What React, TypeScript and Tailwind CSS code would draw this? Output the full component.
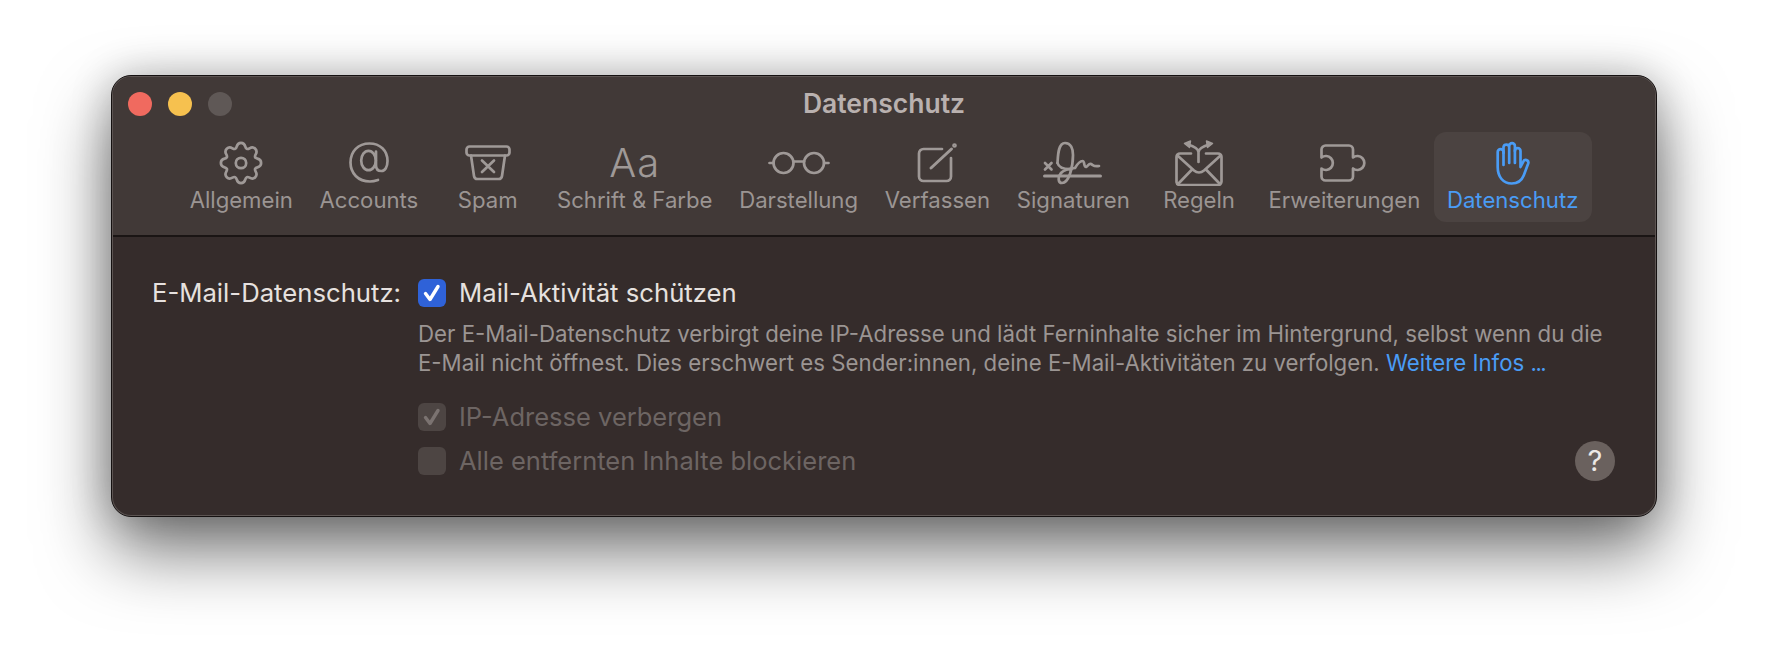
import React from "react";

const G = "#9f9997";

function Svg({ w, h, children, color = G, sw = 2.7 }: { w: number; h: number; children: React.ReactNode; color?: string; sw?: number }) {
  return (
    <svg width={w} height={h} viewBox={`0 0 ${w} ${h}`} fill="none" stroke={color} strokeWidth={sw} strokeLinecap="round" strokeLinejoin="round">
      {children}
    </svg>
  );
}

function gearPath() {
  const cx = 22;
  const cy = 22;
  const verts: [number, number][] = [];
  for (let i = 0; i < 8; i++) {
    const a = (i * 45 - 90) * (Math.PI / 180);
    const spread = 9.5 * (Math.PI / 180);
    const valley = 22.5 * (Math.PI / 180);
    const pts: [number, number][] = [
      [a - spread, 20.4],
      [a + spread, 20.4],
      [a + valley, 13.8],
    ];
    for (const [ang, r] of pts) verts.push([cx + r * Math.cos(ang), cy + r * Math.sin(ang)]);
  }
  const mid = (p: [number, number], q: [number, number]) => [(p[0] + q[0]) / 2, (p[1] + q[1]) / 2];
  const n = verts.length;
  const s = mid(verts[n - 1], verts[0]);
  let d = `M${s[0].toFixed(2)} ${s[1].toFixed(2)}`;
  for (let i = 0; i < n; i++) {
    const m = mid(verts[i], verts[(i + 1) % n]);
    d += `Q${verts[i][0].toFixed(2)} ${verts[i][1].toFixed(2)} ${m[0].toFixed(2)} ${m[1].toFixed(2)}`;
  }
  return d + "Z";
}

const Gear = () => (
  <Svg w={44} h={44}>
    <path d={gearPath()} />
    <circle cx="22" cy="22" r="5.200" />
  </Svg>
);
const At = () => (
  <Svg w={40} h={41}>
    <path d="M29 38C26 39 24 39.500 21 39.500 9 39.500 1.500 31 1.500 20.500 1.500 9.500 9 1.500 20.500 1.500 31 1.500 38.500 8.500 38.500 19 38.500 25 36 29 32.500 29 29 29 27 27 27 23.500V9.500" />
    <ellipse cx="19.500" cy="18.500" rx="7.300" ry="9.700" />
  </Svg>
);
const Trash = () => (
  <Svg w={46} h={36}>
    <rect x="1.500" y="1.500" width="43" height="9" rx="3" />
    <path d="M6 10.500L9 31a3.500 3.500 0 0 0 3.500 3h21a3.500 3.500 0 0 0 3.500-3l3-20.500" />
    <path d="M17 15.500l12 11.500M29 15.500L17 27" />
  </Svg>
);
const Glasses = () => (
  <Svg w={62} h={26}>
    <circle cx="15.500" cy="13" r="10" />
    <circle cx="46" cy="13" r="10" />
    <path d="M1.500 13h4M56 13h4.500M25.500 11.500h10.500" />
  </Svg>
);
const Compose = () => (
  <Svg w={40} h={40}>
    <path d="M25 6H6.500a4.500 4.500 0 0 0-4.500 4.500v23a4.500 4.500 0 0 0 4.500 4.500h23a4.500 4.500 0 0 0 4.500-4.500V15" />
    <path d="M14 25L34.500 6" strokeWidth="3" />
    <circle cx="37.500" cy="2.500" r="1" />
  </Svg>
);
const Signature = () => (
  <Svg w={60} h={44}>
    <path d="M1.500 35h56" strokeWidth="3" />
    <path d="M2 22l6.500 6.500M8.500 22L2 28.500" />
    <path d="M14.500 22C15 15 15 2 22 2 28 2 30 8 30 14 30 26 26 42 19 42 15 42 14.500 36 18 32 21 28.500 27 27.500 32 27 35 22 37.500 20 39.500 20 42 20 40.500 26 43 26 45 25 46 22 48 23 50 24 51 26 56 25" />
    <path d="M14.500 22c1 3.500 5 6.500 14 6" />
  </Svg>
);
const Rules = () => (
  <Svg w={48} h={46}>
    <path d="M16 13.500H5a3.500 3.500 0 0 0-3.500 3.500v25A3.500 3.500 0 0 0 5 45h38a3.500 3.500 0 0 0 3.500-3.500V17a3.500 3.500 0 0 0-3.500-3.500H31" />
    <path d="M3 16l16 14.500c3 2.500 7 2.500 10 0L45 16M3.500 43.500L17.500 29M44.500 43.500L30.500 29" />
    <path d="M23.500 22V12C23 8.500 18 6 13 4.500M23.500 12C24 8.500 29 6 34 4.500" />
    <path d="M9.500 3.500L15.500 1 14.500 7.500zM37.500 3.500L31.500 1 32.500 7.500z" fill={G} strokeWidth="1.500" />
  </Svg>
);
const Puzzle = () => (
  <Svg w={48} h={38}>
    <path d="M5.500 1.500H29a4 4 0 0 1 4 4V13.500A7 7 0 1 1 33 24.500V32.500a4 4 0 0 1-4 4H5.500a4 4 0 0 1-4-4V24.500A7 7 0 1 0 1.500 13.500V5.500a4 4 0 0 1 4-4z" />
  </Svg>
);
const Hand = () => (
  <Svg w={34} h={44} color="#4a9cf5">
    <path d="M7.500 24V11a2.900 2.900 0 0 0-5.800 0v15c0 10 5.500 16.500 14 16.500 6 0 10-3 12-8l4.500-12a2.600 2.600 0 0 0-5-1.700L24.500 26V10a2.800 2.800 0 0 0-5.600 0" />
    <path d="M7.500 12V6a2.900 2.900 0 0 1 5.700 0v16M13.200 6V5a2.850 2.850 0 0 1 5.700 0v17" />
  </Svg>
);
const Aa = () => (
  <span className="text-[40px] leading-[46px] font-light tracking-[1px] text-[#9f9997]">Aa</span>
);

const items: { label: string; icon: React.ReactNode; active?: boolean }[] = [
  { label: "Allgemein", icon: <Gear /> },
  { label: "Accounts", icon: <At /> },
  { label: "Spam", icon: <Trash /> },
  { label: "Schrift & Farbe", icon: <Aa /> },
  { label: "Darstellung", icon: <Glasses /> },
  { label: "Verfassen", icon: <Compose /> },
  { label: "Signaturen", icon: <Signature /> },
  { label: "Regeln", icon: <Rules /> },
  { label: "Erweiterungen", icon: <Puzzle /> },
  { label: "Datenschutz", icon: <Hand />, active: true },
];

function Box({ tone }: { tone: "on" | "dim" | "off" }) {
  const bg = tone === "on" ? "bg-[#2f62d8]" : "bg-[#4d4543]";
  return (
    <span className={`flex h-[28px] w-[28px] shrink-0 items-center justify-center rounded-[6px] ${bg}`}>
      {tone !== "off" && (
        <svg width="20" height="20" viewBox="0 0 20 20" fill="none" stroke={tone === "on" ? "#ffffff" : "#7b7371"} strokeWidth="3.400" strokeLinecap="round" strokeLinejoin="round">
          <path d="M3.500 10.500l4.500 6L16 3.500" />
        </svg>
      )}
    </span>
  );
}

export default function App() {
  return (
    <div className="h-[664px] w-[1768px] overflow-hidden bg-white pl-[111px] pt-[75px] font-['Inter',sans-serif]">
      <div className="h-[442px] w-[1546px] rounded-[20px] border border-[#151111] bg-[#5c5452] p-[1px] shadow-[0_34px_70px_rgba(0,0,0,0.55),0_0_40px_rgba(0,0,0,0.22)]">
        <div className="flex h-full flex-col overflow-hidden rounded-[18px] bg-[#352c2b]">
          <header className="flex h-[160px] shrink-0 flex-col border-b-2 border-[#1a1514] bg-[#413937]">
            <div className="flex h-[54px] shrink-0 items-center">
              <div className="flex w-[170px] gap-[16px] pl-[15px]">
                <span className="h-[24px] w-[24px] rounded-full bg-[#f06a5f]" />
                <span className="h-[24px] w-[24px] rounded-full bg-[#f6c14f]" />
                <span className="h-[24px] w-[24px] rounded-full bg-[#5f5856]" />
              </div>
              <div className="flex-1 pr-[170px] text-center text-[26.5px] font-semibold text-[#b9b1af]">Datenschutz</div>
            </div>
            <nav className="mt-[1px] flex justify-center">
              {items.map((it) => (
                <div key={it.label} className={`flex h-[90px] min-w-[112px] flex-col items-center rounded-[12px] px-[13.35px] ${it.active ? "bg-[#4b4341]" : ""}`}>
                  <div className="flex h-[56px] items-center justify-center pt-[5px]">{it.icon}</div>
                  <div className={`text-[22.15px] leading-[24px] whitespace-nowrap ${it.active ? "text-[#4a9cf5]" : "text-[#9b9593]"}`}>{it.label}</div>
                </div>
              ))}
            </nav>
          </header>
          <main className="flex flex-1 pr-[40px] pt-[40px]">
            <div className="w-[288px] shrink-0 text-right text-[25.7px] leading-[32px] text-[#e6e1df]">E-Mail-Datenschutz:</div>
            <div className="ml-[17px] flex flex-1 flex-col">
              <div className="flex h-[32px] items-center gap-[13px]">
                <Box tone="on" />
                <span className="text-[25.7px] text-[#e6e1df]">Mail-Aktivität schützen</span>
              </div>
              <p className="mt-[10px] whitespace-nowrap text-[22.25px] leading-[29px] text-[#9b9593]">
                Der E-Mail-Datenschutz verbirgt deine IP-Adresse und lädt Ferninhalte sicher im Hintergrund, selbst wenn du die
                <br />
                E-Mail nicht öffnest. Dies erschwert es Sender:innen, deine E-Mail-Aktivitäten zu verfolgen. <span className="text-[#4a9cf5]">Weitere Infos <span className="tracking-[-1.5px]">...</span></span>
              </p>
              <div className="mt-[24px] flex h-[32px] items-center gap-[13px]">
                <Box tone="dim" />
                <span className="text-[25.5px] text-[#6d6563]">IP-Adresse verbergen</span>
              </div>
              <div className="mt-[12px] flex h-[32px] items-center justify-between">
                <div className="flex items-center gap-[13px]">
                  <Box tone="off" />
                  <span className="text-[25.5px] text-[#6d6563]">Alle entfernten Inhalte blockieren</span>
                </div>
                <span className="flex h-[40px] w-[40px] items-center justify-center rounded-full bg-[#6a615e] text-[29px] text-[#ece8e6]">?</span>
              </div>
            </div>
          </main>
        </div>
      </div>
    </div>
  );
}
